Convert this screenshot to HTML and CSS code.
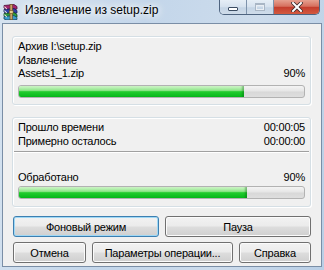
FILE: index.html
```html
<!DOCTYPE html>
<html lang="ru">
  <head>
    <meta charset="UTF-8" />
    <title>Извлечение из setup.zip</title>
    <link rel="stylesheet" href="styles.css">
  </head>
  <body>
  <div class="window">
    <div class="titlebar">
      <svg class="app-icon" viewBox="0 0 16 16" width="16" height="16">
        <path d="M1 1.5 L11 0.5 L14 2.5 L14 5 L4 6 L1 4 Z" fill="#a3246f" stroke="#4a1035" stroke-width="0.8"/>
        <path d="M1 5.5 L11 4.5 L14 6.5 L14 9 L4 10 L1 8 Z" fill="#2f3fa6" stroke="#141c55" stroke-width="0.8"/>
        <path d="M1 9.5 L11 8.5 L14 10.5 L14 13 L4 14 L1 12 Z" fill="#2f9e3b" stroke="#12451a" stroke-width="0.8"/>
        <path d="M1 12.5 L11 11.5 L14 13.5 L14 15.5 L4 16 L1 15 Z" fill="#3a9ccc" stroke="#15455e" stroke-width="0.8"/>
        <path d="M1.5 2 L4 4.5 L4 5.5 L1.5 3.5 Z M1.5 6 L4 8.5 L4 9.5 L1.5 7.5 Z M1.5 10 L4 12.5 L4 13.5 L1.5 11.5 Z" fill="#f4f1e6"/>
        <rect x="7" y="0.5" width="2.4" height="15.2" fill="#c9a36a" stroke="#6b4a1c" stroke-width="0.6"/>
        <rect x="6.3" y="6.5" width="3.8" height="3" fill="#e6cf8c" stroke="#6b4a1c" stroke-width="0.6"/>
      </svg>
      <span class="title">Извлечение из setup.zip</span>
      <div class="caption-buttons">
        <div class="cap-btn cap-min"><span class="min-glyph"></span></div>
        <div class="cap-btn cap-max"><span class="max-glyph"></span></div>
        <div class="cap-btn cap-close">
          <svg viewBox="0 0 12 10" width="12" height="10">
            <path d="M2 1 L10 9 M10 1 L2 9" stroke="#3a2a2a" stroke-width="3.6" stroke-linecap="square"/>
            <path d="M2 1 L10 9 M10 1 L2 9" stroke="#ffffff" stroke-width="2" stroke-linecap="square"/>
          </svg>
        </div>
      </div>
    </div>

    <div class="client">
      <div class="group group-file">
        <div class="row">Архив I:\setup.zip</div>
        <div class="row">Извлечение</div>
        <div class="row"><span>Assets1_1.zip</span><span>90%</span></div>
        <div class="progress progress-file">
          <div class="progress-fill" style="width: 79%"></div>
        </div>
      </div>

      <div class="group group-total">
        <div class="row row-time"><span>Прошло времени</span><span>00:00:05</span></div>
        <div class="row row-time"><span>Примерно осталось</span><span>00:00:00</span></div>
        <div class="separator"></div>
        <div class="row row-done"><span>Обработано</span><span>90%</span></div>
        <div class="progress progress-total">
          <div class="progress-fill" style="width: 80%"></div>
        </div>
      </div>

      <div class="buttons buttons-main">
        <button class="btn btn-default">Фоновый режим</button>
        <button class="btn">Пауза</button>
      </div>
      <div class="buttons buttons-extra">
        <button class="btn">Отмена</button>
        <button class="btn">Параметры операции...</button>
        <button class="btn">Справка</button>
      </div>
    </div>
  </div>
  </body>
</html>
```

FILE: styles.css
```css
* {
  margin: 0;
  padding: 0;
  box-sizing: border-box;
}

body {
  width: 324px;
  height: 270px;
  overflow: hidden;
  font-family: "Liberation Sans", Arial, sans-serif;
  font-size: 11px;
  letter-spacing: -0.2px;
  color: #000;
  background: #bfd3e8;
}

.window {
  height: 270px;
  padding: 0 2px 3px 2px;
  display: flex;
  flex-direction: column;
  background: linear-gradient(100deg, #d6e3f0 0%, #c3d6ea 40%, #cddcec 70%, #b9cfe6 100%);
}

/* title bar */
.titlebar {
  height: 23px;
  display: flex;
  align-items: flex-start;
}

.app-icon {
  flex: none;
  margin: 4px 0 0 1px;
}

.title {
  margin: 2px 0 0 6px;
  font-size: 12px;
  letter-spacing: 0;
  line-height: 16px;
  color: #000;
  text-shadow: 0 0 6px #fff, 0 0 10px #fff, 0 0 14px rgba(255, 255, 255, 0.9);
}

.caption-buttons {
  margin-left: auto;
  margin-right: 2px;
  display: flex;
  height: 15px;
  border: 1px solid #4e6480;
  border-top: none;
  border-radius: 0 0 5px 5px;
  overflow: hidden;
}

.cap-btn {
  height: 100%;
  display: flex;
  align-items: center;
  justify-content: center;
}

.cap-min,
.cap-max {
  width: 27px;
  background: linear-gradient(#e6eef6 0%, #d5e1ee 50%, #c4d4e5 55%, #cfdcea 100%);
  border-right: 1px solid #7d92ab;
}

.cap-min {
  align-items: flex-end;
  padding-bottom: 3px;
}

.min-glyph {
  width: 10px;
  height: 4px;
  background: #fff;
  border: 1px solid #3b4c62;
  border-radius: 1px;
}

.max-glyph {
  width: 10px;
  height: 8px;
  border: 1px solid #a9b6c5;
  border-top-width: 2px;
  box-shadow: inset 0 0 0 1px #e9eef4;
}

.cap-close {
  width: 45px;
  background: linear-gradient(#e6a090 0%, #d6705e 45%, #c43d2d 52%, #d35a40 100%);
}

/* client area */
.client {
  flex: 1;
  background: #f0f0f0;
  border: 1px solid #7a8ea6;
  padding: 12px 10px 0 9px;
  display: flex;
  flex-direction: column;
}

.group {
  border: 1px solid #d5dfe5;
  border-radius: 3px;
  box-shadow: inset 1px 1px 0 #fff, 1px 1px 0 #fff;
  padding: 3px 5px 6px 5px;
}

.group-total {
  margin-top: 12px;
  padding-top: 2px;
  padding-bottom: 7px;
}

.row {
  display: flex;
  justify-content: space-between;
  height: 13.5px;
  line-height: 13.5px;
  white-space: nowrap;
}

.row-time {
  height: 14px;
  line-height: 14px;
}

.separator {
  height: 1px;
  margin: 3px -4px 0;
  background: #a0a0a0;
  box-shadow: 0 1px 0 #fff;
}

.row-done {
  margin-top: 19px;
}

/* progress bars */
.progress {
  height: 13px;
  margin-top: 4px;
  border: 1px solid #b2b2b2;
  border-radius: 3px;
  background: linear-gradient(#f4f4f4 0%, #e6e6e6 45%, #d8d8d8 55%, #dedede 100%);
  overflow: hidden;
}

.progress-total {
  margin-top: 2px;
}

.progress-fill {
  height: 100%;
  background: linear-gradient(#d2f6cb 0%, #8fe68a 40%, #22cc2e 52%, #06b81a 100%);
  box-shadow: inset -3px 0 2px -1px rgba(0, 90, 10, 0.35);
}

/* buttons */
.buttons {
  display: grid;
  gap: 6px;
  margin-left: 1px;
}

.buttons-main {
  grid-template-columns: 1fr 1fr;
  margin-top: 9px;
}

.buttons-extra {
  grid-template-columns: 73px 141px 1fr;
  margin-top: 5px;
}

.btn {
  height: 21px;
  font-family: inherit;
  font-size: 11px;
  letter-spacing: -0.2px;
  color: #000;
  border: 1px solid #707070;
  border-radius: 3px;
  background: linear-gradient(#f2f2f2 0%, #ebebeb 48%, #dddddd 52%, #cfcfcf 100%);
  box-shadow: inset 0 0 0 1px #fbfbfb;
  white-space: nowrap;
}

.btn-default {
  border-color: #3c7fb1;
  box-shadow: inset 0 0 0 1px #9fd8f5;
}
```
